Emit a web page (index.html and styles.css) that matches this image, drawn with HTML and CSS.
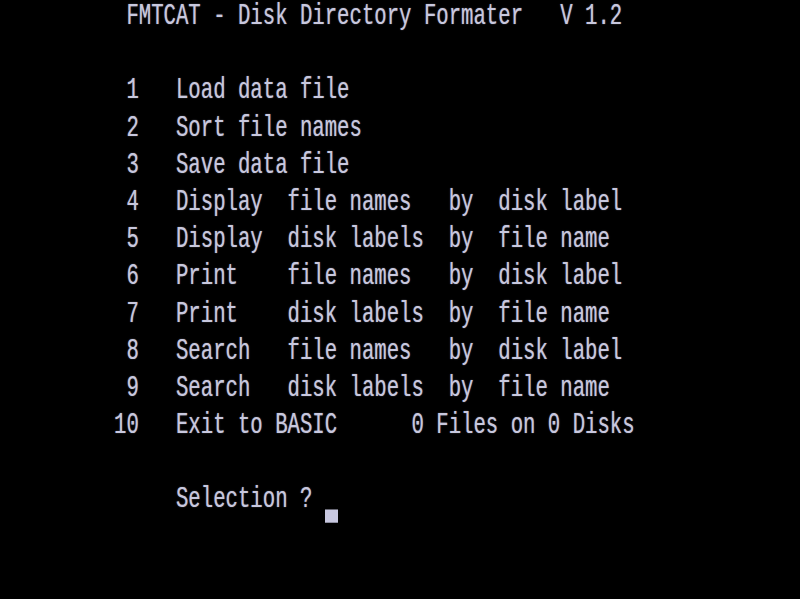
FILE: index.html
```html
<!DOCTYPE html>
<html lang="en">
<head>
<meta charset="utf-8">
<title>FMTCAT</title>
<link rel="stylesheet" href="styles.css">
</head>
<body>
<main class="screen">
<div class="line"> FMTCAT - Disk Directory Formater   V 1.2</div>
<div class="line"> </div>
<div class="line"> 1   Load data file</div>
<div class="line"> 2   Sort file names</div>
<div class="line"> 3   Save data file</div>
<div class="line"> 4   Display  file names   by  disk label</div>
<div class="line"> 5   Display  disk labels  by  file name</div>
<div class="line"> 6   Print    file names   by  disk label</div>
<div class="line"> 7   Print    disk labels  by  file name</div>
<div class="line"> 8   Search   file names   by  disk label</div>
<div class="line"> 9   Search   disk labels  by  file name</div>
<div class="line">10   Exit to BASIC      0 Files on 0 Disks</div>
<div class="line"> </div>
<div class="line">     Selection ? <span class="cursor"></span></div>
</main>
</body>
</html>
```

FILE: styles.css
```css
html, body {
  margin: 0;
  padding: 0;
  background: #000;
  height: 100%;
  overflow: hidden;
}

.screen {
  margin-top: -3px;
  padding-left: 114px;
  font-family: "Liberation Mono", "DejaVu Sans Mono", monospace;
  font-size: 20.67px;
  color: #c8c8de;
  text-shadow: 0 0 1px rgba(200, 200, 230, 0.6);
}

.line {
  white-space: pre;
  line-height: 37.2px;
  height: 37.2px;
  transform: scaleY(1.47);
  transform-origin: center;
}

.cursor {
  display: inline-block;
  width: 13px;
  height: 8.8px;
  vertical-align: -10.8px;
  background: #c8c8e0;
}
```
